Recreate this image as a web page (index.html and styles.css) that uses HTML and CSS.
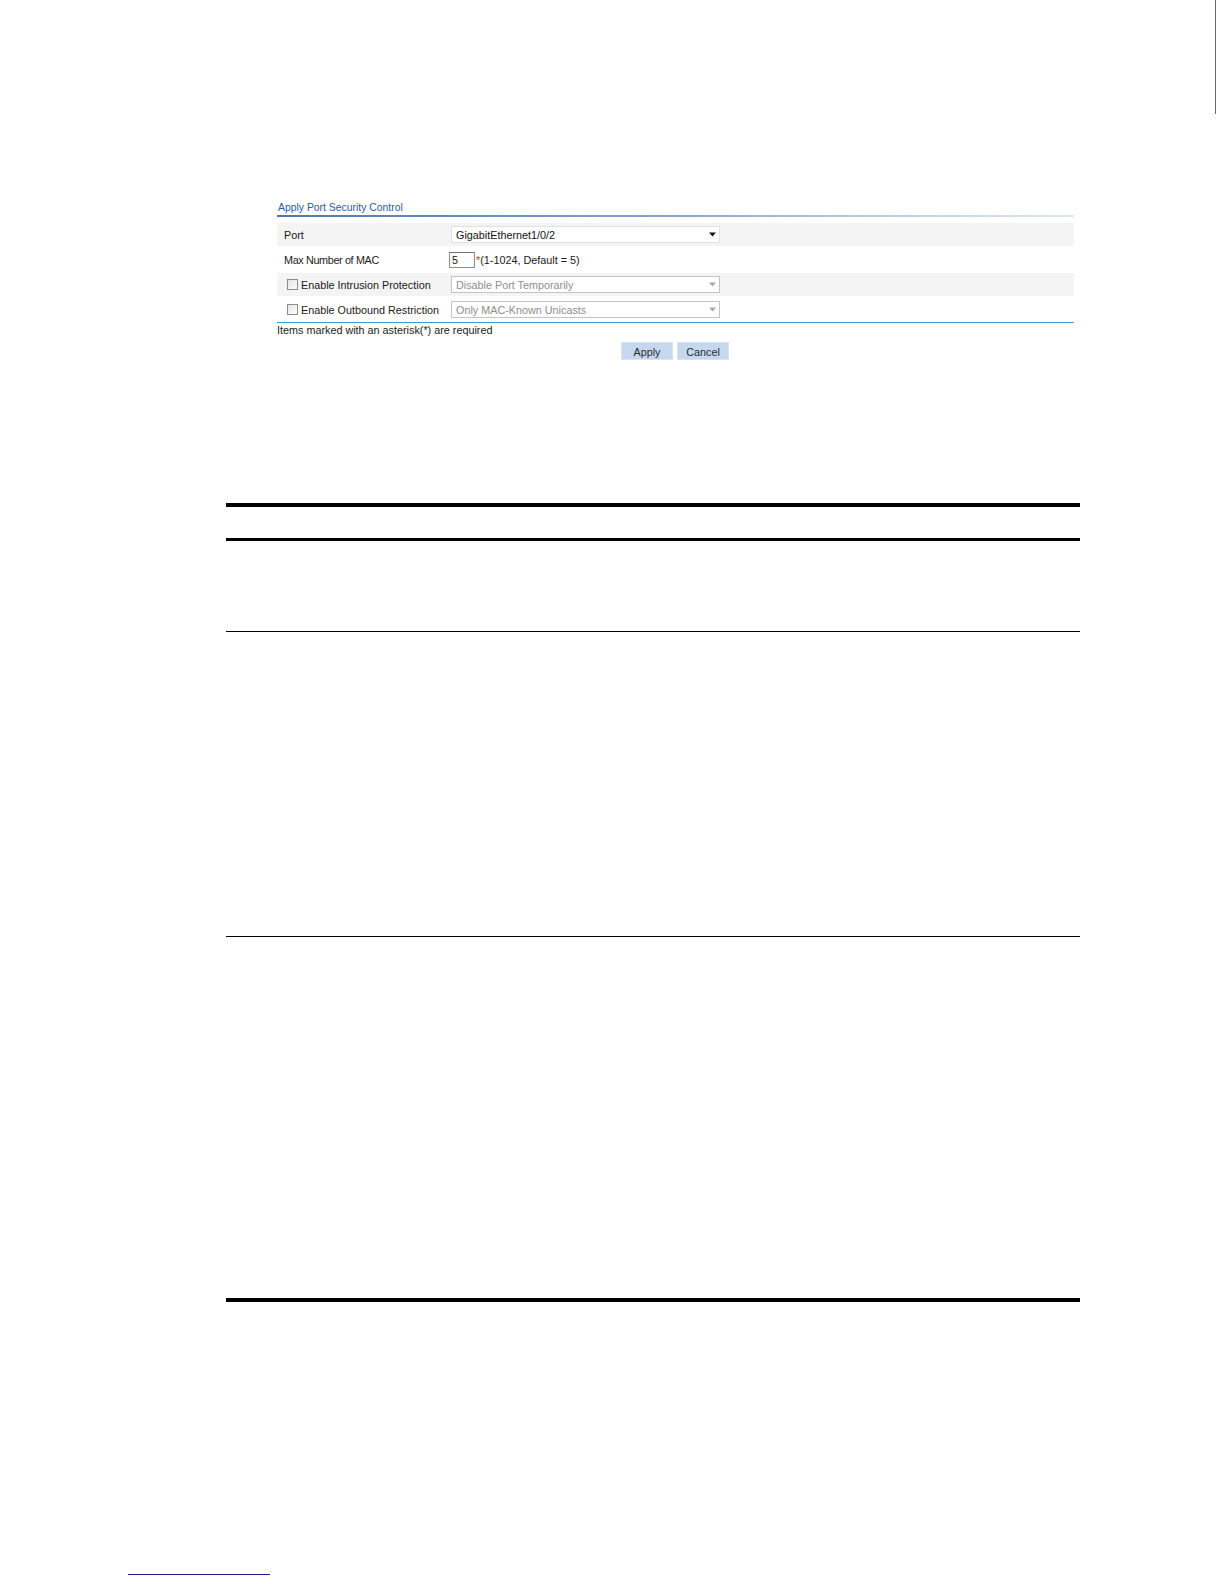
FILE: index.html
```html
<!DOCTYPE html>
<html>
<head>
<meta charset="utf-8">
<link rel="stylesheet" href="styles.css">
</head>
<body>
<div class="page">
  <div class="edge-mark"></div>
  <div class="panel">
    <div class="panel-title">Apply Port Security Control</div>
    <div class="panel-rule"></div>
    <div class="rows">
      <div class="row shaded">
        <div class="label">Port</div>
        <div class="field">
          <div class="select">
            <span>GigabitEthernet1/0/2</span>
            <svg class="arrow" width="7" height="5" viewBox="0 0 7 5"><path d="M0 0.5h7L3.5 4.5z" fill="#111"/></svg>
          </div>
        </div>
      </div>
      <div class="row">
        <div class="label tight">Max Number of MAC</div>
        <div class="field">
          <div class="textbox">5</div>
          <span class="star">*</span><span class="hint">(1-1024, Default = 5)</span>
        </div>
      </div>
      <div class="row shaded">
        <div class="label check"><span class="box"></span>Enable Intrusion Protection</div>
        <div class="field">
          <div class="select disabled">
            <span>Disable Port Temporarily</span>
            <svg class="arrow" width="7" height="5" viewBox="0 0 7 5"><path d="M0 0.5h7L3.5 4.5z" fill="#a8a8a8"/></svg>
          </div>
        </div>
      </div>
      <div class="row">
        <div class="label check"><span class="box"></span>Enable Outbound Restriction</div>
        <div class="field">
          <div class="select disabled">
            <span>Only MAC-Known Unicasts</span>
            <svg class="arrow" width="7" height="5" viewBox="0 0 7 5"><path d="M0 0.5h7L3.5 4.5z" fill="#a8a8a8"/></svg>
          </div>
        </div>
      </div>
    </div>
    <div class="panel-foot"></div>
    <div class="note">Items marked with an asterisk(*) are required</div>
    <div class="buttons">
      <div class="btn">Apply</div>
      <div class="btn">Cancel</div>
    </div>
  </div>

  <div class="doc-table">
    <div class="t-head"></div>
    <div class="t-row r1"></div>
    <div class="t-row r2"></div>
    <div class="t-row r3"></div>
  </div>

  <div class="footer-link"></div>
</div>
</body>
</html>
```

FILE: styles.css
```css
html, body {
  margin: 0;
  padding: 0;
  background: #ffffff;
}

.page {
  position: relative;
  width: 1224px;
  height: 1584px;
  font-family: "Liberation Sans", Arial, sans-serif;
  overflow: hidden;
}

.edge-mark {
  position: absolute;
  left: 1215px;
  top: 0;
  width: 1px;
  height: 114px;
  background: #6a6a6a;
}

.panel {
  margin-left: 277px;
  width: 797px;
  padding-top: 201px;
}

.panel-title {
  font-size: 10.4px;
  color: #2b5a9e;
  height: 13px;
  line-height: 13px;
  padding-left: 1px;
}

.panel-rule {
  margin-top: 1px;
  height: 2px;
  background: linear-gradient(to right, #4f76ad 0%, #7fa0c6 45%, #b9cde0 75%, #dfe7ef 100%);
}

.rows {
  margin-top: 5px;
  display: flex;
  flex-direction: column;
}

.row {
  height: 25px;
  display: flex;
  align-items: center;
  font-size: 10.8px;
  color: #1a1a1a;
}

.row.shaded {
  background: #f4f4f4;
  border-top: 1px solid #ffffff;
  border-bottom: 1px solid #ffffff;
  box-sizing: border-box;
}

.label {
  width: 167px;
  padding-left: 7px;
  display: flex;
  align-items: center;
}

.label.tight {
  letter-spacing: -0.35px;
}

.label.check {
  padding-left: 10px;
  width: 164px;
}

.box {
  width: 11px;
  height: 11px;
  border: 1px solid #8c8c8c;
  background: linear-gradient(135deg, #e4e4e4, #ffffff);
  margin-right: 3px;
  box-sizing: border-box;
}

.field {
  display: flex;
  align-items: center;
}

.select {
  width: 269px;
  height: 17px;
  box-sizing: border-box;
  border: 1px solid #e2e2e2;
  background: #ffffff;
  display: flex;
  align-items: center;
  justify-content: space-between;
  padding: 0 3px 0 4px;
  color: #111;
  font-size: 10.8px;
}

.select.disabled {
  border-color: #c4c4c4;
  color: #8e8e8e;
}

.arrow {
  display: block;
}

.textbox {
  width: 26px;
  height: 16px;
  box-sizing: border-box;
  border: 1px solid #8f8f8f;
  border-top-color: #6f6f6f;
  margin-left: -2px;
  padding-left: 2px;
  line-height: 14px;
  font-size: 10.8px;
  background: #fff;
}

.star {
  color: #e02020;
  margin-left: 1px;
}

.hint {
  color: #1a1a1a;
}

.panel-foot {
  margin-top: 0;
  height: 1px;
  background: #3b9cd3;
}

.note {
  font-size: 10.8px;
  color: #1a1a1a;
  margin-top: 1px;
  line-height: 13px;
}

.buttons {
  display: flex;
  gap: 4px;
  margin-top: 5px;
  margin-left: 344px;
}

.btn {
  width: 52px;
  height: 18px;
  box-sizing: border-box;
  background: #c6d7f0;
  border: 1px solid #d9e3f2;
  font-size: 10.8px;
  color: #2a2a2a;
  display: flex;
  align-items: center;
  justify-content: center;
  padding-top: 2px;
}

.doc-table {
  margin-left: 226px;
  width: 854px;
  margin-top: 143px;
  border-top: 4px solid #000;
  border-bottom: 4px solid #000;
}

.t-head {
  height: 31px;
  border-bottom: 3px solid #000;
}

.t-row.r1 {
  height: 90px;
  border-bottom: 1px solid #000;
}

.t-row.r2 {
  height: 304px;
  border-bottom: 1px solid #000;
}

.t-row.r3 {
  height: 361px;
}

.footer-link {
  position: absolute;
  left: 128px;
  top: 1574px;
  width: 142px;
  height: 0;
  border-bottom: 1px solid #1c1c8e;
}
```
